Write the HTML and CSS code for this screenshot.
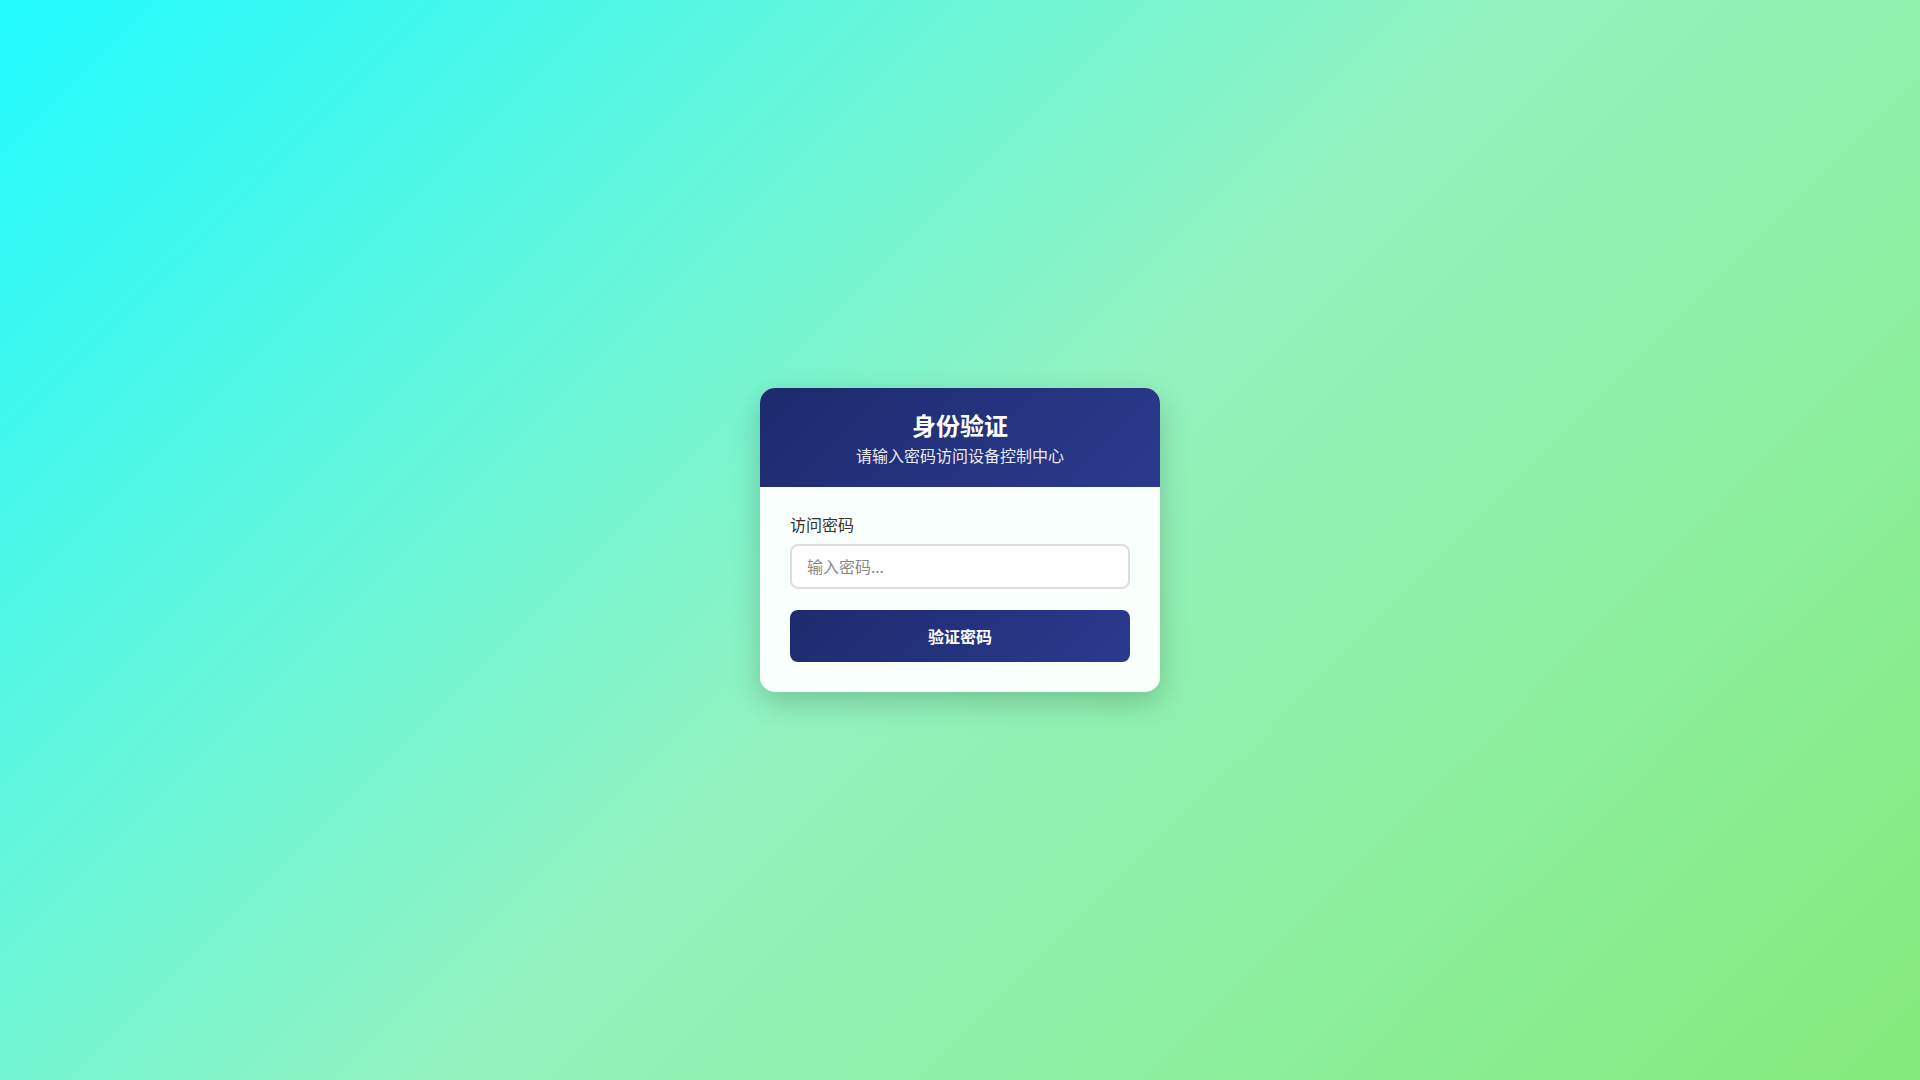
FILE: index.html
```html
<!DOCTYPE html>
<html lang="zh-CN">
<head>
<meta charset="utf-8">
<title>身份验证</title>
<link rel="stylesheet" href="styles.css">
</head>
<body>
<div class="page">
  <div class="card">
    <div class="card-header">
      <h1 class="title">身份验证</h1>
      <p class="subtitle">请输入密码访问设备控制中心</p>
    </div>
    <div class="card-body">
      <div class="form-group">
        <label class="label" for="pwd">访问密码</label>
        <input class="input" id="pwd" type="password" placeholder="输入密码...">
      </div>
      <button class="btn" type="button">验证密码</button>
    </div>
  </div>
</div>
</body>
</html>
```

FILE: styles.css
```css
* { box-sizing: border-box; }
html, body {
  margin: 0;
  padding: 0;
  height: 100%;
}
body {
  font-family: "Noto Sans", "Noto Sans CJK SC", sans-serif;
  line-height: 1.5;
  background: linear-gradient(135deg, #20faff 0%, #93f3c0 50%, #85ea7b 100%);
}
.page {
  width: 100%;
  height: 100vh;
  display: flex;
  align-items: center;
  justify-content: center;
}
.card {
  width: 400px;
  border-radius: 15px;
  overflow: hidden;
  background: rgba(255, 255, 255, 0.95);
  box-shadow: 0 10px 30px rgba(0, 0, 0, 0.2);
}
.card-header {
  background: linear-gradient(135deg, #1e2a6d 0%, #2b3a8e 100%);
  color: #fff;
  text-align: center;
  padding: 20px 20px 19px;
}
.title {
  margin: 0;
  font-size: 24px;
  font-weight: 700;
  line-height: 36px;
}
.subtitle {
  margin: 0;
  font-size: 16px;
  line-height: 24px;
  opacity: 0.9;
}
.card-body {
  padding: 26px 30px 30px;
}
.form-group {
  margin-bottom: 21px;
}
.label {
  display: block;
  font-size: 16px;
  line-height: 24px;
  color: #333;
  margin-bottom: 7px;
}
.input {
  display: block;
  width: 100%;
  height: 45px;
  padding: 0 15px;
  border: 2px solid #ddd;
  border-radius: 8px;
  background: #fff;
  font-family: inherit;
  font-size: 16px;
  color: #333;
  outline: none;
}
.input::placeholder {
  color: #888;
}
.btn {
  display: block;
  width: 100%;
  height: 52px;
  border: none;
  border-radius: 8px;
  background: linear-gradient(135deg, #1e2a6d 0%, #2b3a8e 100%);
  color: #fff;
  font-family: inherit;
  font-size: 16px;
  font-weight: 700;
  cursor: pointer;
}
```
